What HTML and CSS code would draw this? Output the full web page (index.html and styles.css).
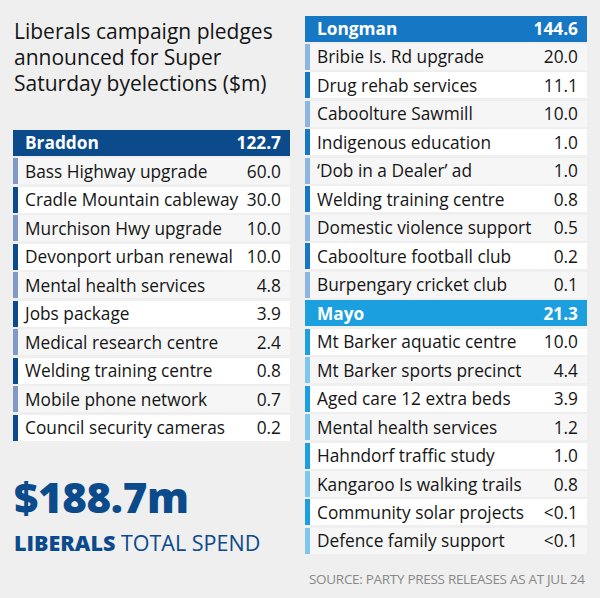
FILE: index.html
```html
<!DOCTYPE html>
<html lang="en">
<head>
<meta charset="utf-8">
<title>Liberals campaign pledges</title>
<link rel="stylesheet" href="styles.css">
</head>
<body>
<div class="page">
  <div class="col col-left">
    <h1 class="title">Liberals campaign pledges announced for Super Saturday byelections ($m)</h1>
    <div class="table sec-braddon">
      <div class="head"><span>Braddon</span><span>122.7</span></div>
      <div class="row l"><span>Bass Highway upgrade</span><span>60.0</span></div>
      <div class="row d"><span>Cradle Mountain cableway</span><span>30.0</span></div>
      <div class="row l"><span>Murchison Hwy upgrade</span><span>10.0</span></div>
      <div class="row d"><span>Devonport urban renewal</span><span>10.0</span></div>
      <div class="row l"><span>Mental health services</span><span>4.8</span></div>
      <div class="row d"><span>Jobs package</span><span>3.9</span></div>
      <div class="row l"><span>Medical research centre</span><span>2.4</span></div>
      <div class="row d"><span>Welding training centre</span><span>0.8</span></div>
      <div class="row l"><span>Mobile phone network</span><span>0.7</span></div>
      <div class="row d"><span>Council security cameras</span><span>0.2</span></div>
    </div>
    <div class="total">
      <div class="amount">$188.7m</div>
      <div class="label"><b>LIBERALS</b> TOTAL SPEND</div>
    </div>
  </div>
  <div class="col col-right">
    <div class="table">
      <div class="sec-longman">
        <div class="head"><span>Longman</span><span>144.6</span></div>
        <div class="row l"><span>Bribie Is. Rd upgrade</span><span>20.0</span></div>
        <div class="row d"><span>Drug rehab services</span><span>11.1</span></div>
        <div class="row l"><span>Caboolture Sawmill</span><span>10.0</span></div>
        <div class="row d"><span>Indigenous education</span><span>1.0</span></div>
        <div class="row l"><span>‘Dob in a Dealer’ ad</span><span>1.0</span></div>
        <div class="row d"><span>Welding training centre</span><span>0.8</span></div>
        <div class="row l"><span>Domestic violence support</span><span>0.5</span></div>
        <div class="row d"><span>Caboolture football club</span><span>0.2</span></div>
        <div class="row l"><span>Burpengary cricket club</span><span>0.1</span></div>
      </div>
      <div class="sec-mayo">
        <div class="head"><span>Mayo</span><span>21.3</span></div>
        <div class="row d"><span>Mt Barker aquatic centre</span><span>10.0</span></div>
        <div class="row l"><span>Mt Barker sports precinct</span><span>4.4</span></div>
        <div class="row d"><span>Aged care 12 extra beds</span><span>3.9</span></div>
        <div class="row l"><span>Mental health services</span><span>1.2</span></div>
        <div class="row d"><span>Hahndorf traffic study</span><span>1.0</span></div>
        <div class="row l"><span>Kangaroo Is walking trails</span><span>0.8</span></div>
        <div class="row d"><span>Community solar projects</span><span>&lt;0.1</span></div>
        <div class="row l"><span>Defence family support</span><span>&lt;0.1</span></div>
      </div>
    </div>
    <div class="source">SOURCE: PARTY PRESS RELEASES AS AT JUL 24</div>
  </div>
</div>
</body>
</html>
```
FILE: styles.css
```css
html, body {
  margin: 0;
  padding: 0;
  background: #efefef;
}
body {
  font-family: "Open Sans", "Noto Sans", sans-serif;
  color: #151515;
  width: 600px;
  height: 598px;
  overflow: hidden;
}
.page {
  display: grid;
  grid-template-columns: 277px 282px;
  column-gap: 15px;
  padding: 15.5px 13px 0 13px;
}
.col {
  display: flex;
  flex-direction: column;
}
.title {
  margin: 2.3px 0 0 1px;
  font-size: 21px;
  line-height: 26px;
  font-weight: 400;
  color: #151515;
}
.table,
.sec-longman,
.sec-mayo {
  display: flex;
  flex-direction: column;
  gap: 2.47px;
}
.sec-braddon { margin-top: 34.2px; --dark: #0b4a8b; --light: #8099c6; }
.sec-longman { --dark: #1677c5; --light: #8cb6e1; }
.sec-mayo { --dark: #1c9fdf; --light: #7fc7ec; }

.head,
.row {
  height: 26px;
  display: flex;
  align-items: center;
  justify-content: space-between;
  font-size: 17.3px;
  box-sizing: border-box;
}
.head {
  background: var(--dark);
  color: #fff;
  font-weight: 700;
  padding: 0 9px 0 12px;
}
.row {
  padding: 0 9px 0 7px;
  border-left: 5px solid var(--dark);
  background: #fff;
}
.row.l {
  border-left-color: var(--light);
  background: #f6f6f6;
}
.total {
  margin-top: 34.5px;
  padding-left: 1px;
  color: #0b4a8b;
}
.amount {
  font-size: 42px;
  line-height: 44px;
  font-weight: 800;
  letter-spacing: -0.3px;
}
.label {
  margin-top: 13px;
  font-size: 21.5px;
  line-height: 22px;
  font-weight: 400;
}
.label b {
  font-weight: 800;
}
.source {
  margin-top: 15px;
  padding-left: 4px;
  font-size: 13.5px;
  line-height: 20px;
  letter-spacing: -0.3px;
  color: #888;
  white-space: nowrap;
}
```
